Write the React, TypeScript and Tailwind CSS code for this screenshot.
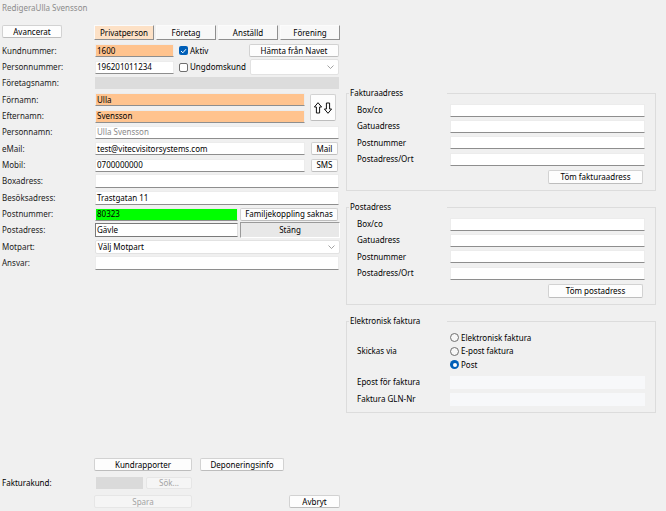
import React from 'react';

type Kids = { children?: React.ReactNode };

const Btn: React.FC<Kids & { w: string; disabled?: boolean; h?: string }> = ({ children, w, disabled, h }) => (
  <div
    className={`${w} ${h ?? 'h-[13px]'} shrink-0 flex items-center justify-center rounded-[2px] border leading-none ${
      disabled ? 'bg-[#f5f5f5] border-[#e6e6e6] text-[#a3a3a3]' : 'bg-[#fdfdfd] border-[#d2d2d2] border-b-[#bdbdbd] text-black'
    }`}
  >
    {children}
  </div>
);

const Field: React.FC<Kids & { w: string; bg?: string; h?: string; muted?: boolean }> = ({ children, w, bg, h, muted }) => (
  <div
    className={`${w} ${h ?? 'h-[13px]'} ${bg ?? 'bg-white'} shrink-0 flex items-center pl-[1px] border border-[#ececec] border-b-[#8e8e8e] leading-none ${
      muted ? 'text-[#8a8a8a]' : 'text-black'
    }`}
  >
    {children}
  </div>
);

const Chevron = () => (
  <svg width="7" height="4" viewBox="0 0 7 4" className="ml-auto mr-[4px]">
    <polyline points="0.5,0.5 3.5,3.5 6.5,0.5" fill="none" stroke="#8a8a8a" strokeWidth="0.8" />
  </svg>
);

const Combo: React.FC<Kids & { w: string; h: string }> = ({ children, w, h }) => (
  <div className={`${w} ${h} shrink-0 flex items-center bg-white border border-[#e2e2e2] rounded-[2px] pl-[2px] leading-none`}>
    {children}
    <Chevron />
  </div>
);

const Row: React.FC<Kids & { label: string }> = ({ label, children }) => (
  <div className="flex items-center h-[16.35px]">
    <div className="w-[95px] pl-[2px] shrink-0 text-[#222]">{label}</div>
    {children}
  </div>
);

const Check: React.FC<{ on?: boolean }> = ({ on }) =>
  on ? (
    <div className="w-[9px] h-[9px] rounded-[2px] bg-[#005fb8] flex items-center justify-center">
      <svg width="7" height="6" viewBox="0 0 7 6">
        <polyline points="1,3 2.8,4.8 6,1.2" fill="none" stroke="white" strokeWidth="1" />
      </svg>
    </div>
  ) : (
    <div className="w-[9px] h-[9px] rounded-[2px] border border-[#6f6f6f] bg-white" />
  );

const Radio: React.FC<{ on?: boolean; label: string }> = ({ on, label }) => (
  <div className="flex items-center h-[13.5px]">
    {on ? (
      <div className="w-[9px] h-[9px] rounded-full bg-[#005fb8] flex items-center justify-center">
        <div className="w-[4px] h-[4px] rounded-full bg-white" />
      </div>
    ) : (
      <div className="w-[9px] h-[9px] rounded-full border border-[#6f6f6f] bg-[#f7f7f7]" />
    )}
    <span className="ml-[2px]">{label}</span>
  </div>
);

const GRow: React.FC<Kids & { label: string }> = ({ label, children }) => (
  <div className="flex items-center h-[16.3px]">
    <div className="w-[103px] pl-[10px] shrink-0">{label}</div>
    {children}
  </div>
);

const Group: React.FC<Kids & { title: string; h: string }> = ({ title, h, children }) => (
  <div className={`${h} border border-[#dcdcdc] flex flex-col`}>
    <div className="-mt-[7px] ml-[2px] w-[98px] h-[12px] bg-[#f0f0f0] pl-[1px] leading-[12px]">{title}</div>
    {children}
  </div>
);

const AddressRows = () => (
  <div className="pt-[3px]">
    {['Box/co', 'Gatuadress', 'Postnummer', 'Postadress/Ort'].map(l => (
      <GRow key={l} label={l}>
        <Field w="w-[195px]" />
      </GRow>
    ))}
  </div>
);

// outlined up / down arrows of the name-swap button
const SwapArrows = () => (
  <svg width="18" height="12" viewBox="0 0 18 12">
    <polygon points="4,0.7 7.6,5 5.6,5 5.6,11 2.4,11 2.4,5 0.4,5" fill="none" stroke="#111" strokeWidth="1" />
    <polygon points="14,11.3 17.6,7 15.6,7 15.6,1 12.4,1 12.4,7 10.4,7" fill="none" stroke="#111" strokeWidth="1" />
  </svg>
);

export default function App() {
  return (
    <div className="w-[666px] h-[511px] bg-[#f0f0f0] overflow-hidden text-[8px] text-black font-['Noto_Sans',sans-serif]">
      <div className="h-[22px] pl-[2px] pt-[2px] leading-[11px] text-[#8c8c8c]">RedigeraUlla Svensson</div>

      <div className="flex h-[489px]">
        {/* left column */}
        <div className="w-[344px] shrink-0 flex flex-col">
          <div className="flex items-start mt-[3px] h-[17.5px]">
            <div className="ml-[2px]">
              <Btn w="w-[60px]">Avancerat</Btn>
            </div>
            <div className="ml-[32px] flex gap-[2px]">
              {['Privatperson', 'Företag', 'Anställd', 'Förening'].map((t, i) => (
                <div
                  key={t}
                  className={`w-[60px] h-[15px] flex items-center justify-center leading-none border border-t-[#fbfbfb] border-l-[#fbfbfb] border-r-[#8f8f8f] border-b-[#8f8f8f] ${
                    i === 0 ? 'bg-[#fde1c6]' : 'bg-[#f8f8f8]'
                  }`}
                >
                  {t}
                </div>
              ))}
            </div>
          </div>

          <Row label="Kundnummer:">
            <Field w="w-[79px]" bg="bg-[#ffc38e]">1600</Field>
            <div className="ml-[5px]"><Check on /></div>
            <span className="ml-[2px]">Aktiv</span>
            <div className="ml-auto mr-[5px]">
              <Btn w="w-[90px]">Hämta från Navet</Btn>
            </div>
          </Row>
          <Row label="Personnummer:">
            <Field w="w-[79px]">196201011234</Field>
            <div className="ml-[5px]"><Check /></div>
            <span className="ml-[2px]">Ungdomskund</span>
            <div className="ml-auto mr-[5px]">
              <Combo w="w-[89px]" h="h-[16px]" />
            </div>
          </Row>
          <Row label="Företagsnamn:">
            <div className="w-[244px] h-[12px] bg-[#dcdcdc]" />
          </Row>
          <div className="flex items-center">
            <div>
              <Row label="Förnamn:">
                <Field w="w-[210px]" bg="bg-[#ffc38e]">Ulla</Field>
              </Row>
              <Row label="Efternamn:">
                <Field w="w-[210px]" bg="bg-[#ffc38e]">Svensson</Field>
              </Row>
            </div>
            <div className="ml-[5px] w-[26px] h-[27px] bg-[#fdfdfd] border border-[#d2d2d2] border-b-[#bdbdbd] rounded-[2px] flex items-center justify-center">
              <SwapArrows />
            </div>
          </div>
          <Row label="Personnamn:">
            <Field w="w-[244px]" muted>Ulla Svensson</Field>
          </Row>
          <Row label="eMail:">
            <Field w="w-[210px]">test@vitecvisitorsystems.com</Field>
            <div className="ml-[6px]"><Btn w="w-[27px]">Mail</Btn></div>
          </Row>
          <Row label="Mobil:">
            <Field w="w-[210px]">0700000000</Field>
            <div className="ml-[6px]"><Btn w="w-[27px]">SMS</Btn></div>
          </Row>
          <Row label="Boxadress:">
            <Field w="w-[244px]" h="h-[14px]" />
          </Row>
          <Row label="Besöksadress:">
            <Field w="w-[244px]" h="h-[14px]">Trastgatan 11</Field>
          </Row>
          <Row label="Postnummer:">
            <Field w="w-[143px]" bg="bg-[#00ff00]">80323</Field>
            <div className="ml-[2px]"><Btn w="w-[98px]">Familjekoppling saknas</Btn></div>
          </Row>
          <Row label="Postadress:">
            <div className="w-[143px] h-[14px] bg-white border border-[#7a7a7a] border-r-[#e0e0e0] flex items-center pl-[1px] leading-none">Gävle</div>
            <div className="ml-[2px] w-[100px] h-[16px] bg-[#e8e8e8] border border-t-[#9a9a9a] border-l-[#9a9a9a] border-r-[#ffffff] border-b-[#ffffff] flex items-center justify-center leading-none">
              Stäng
            </div>
          </Row>
          <Row label="Motpart:">
            <Combo w="w-[245px]" h="h-[14px]">Välj Motpart</Combo>
          </Row>
          <Row label="Ansvar:">
            <Field w="w-[244px]" h="h-[14px]" />
          </Row>

          <div className="mt-auto pb-[3px] flex flex-col gap-[6px]">
            <div className="flex">
              <div className="ml-[94px]"><Btn w="w-[98px]">Kundrapporter</Btn></div>
              <div className="ml-[8px]"><Btn w="w-[84px]">Deponeringsinfo</Btn></div>
            </div>
            <div className="flex items-center h-[12px]">
              <div className="w-[96px] pl-[2px] shrink-0">Fakturakund:</div>
              <div className="w-[47px] h-[12px] bg-[#dadada]" />
              <div className="ml-[3px]"><Btn w="w-[46px]" h="h-[12px]" disabled>Sök...</Btn></div>
            </div>
            <div className="flex">
              <div className="ml-[94px]"><Btn w="w-[98px]" disabled>Spara</Btn></div>
              <div className="ml-[97px]"><Btn w="w-[51px]">Avbryt</Btn></div>
            </div>
          </div>
        </div>

        {/* right column */}
        <div className="ml-[2px] w-[310px] pt-[71px] flex flex-col gap-[16px]">
          <Group title="Fakturaadress" h="h-[98px]">
            <AddressRows />
            <div className="mt-[3px] ml-[201px]"><Btn w="w-[95px]" h="h-[14px]">Töm fakturaadress</Btn></div>
          </Group>
          <Group title="Postadress" h="h-[98px]">
            <AddressRows />
            <div className="mt-[3px] ml-[201px]"><Btn w="w-[95px]" h="h-[14px]">Töm postadress</Btn></div>
          </Group>
          <Group title="Elektronisk faktura" h="h-[92px]">
            <div className="flex items-center pt-[4px]">
              <div className="w-[103px] pl-[10px] shrink-0">Skickas via</div>
              <div className="flex flex-col">
                <Radio label="Elektronisk faktura" />
                <Radio label="E-post faktura" />
                <Radio label="Post" on />
              </div>
            </div>
            <div className="mt-[2px]">
              <div className="flex items-center h-[17px]">
                <div className="w-[103px] pl-[10px] shrink-0">Epost för faktura</div>
                <div className="w-[195px] h-[13px] bg-[#f7f8fa]" />
              </div>
              <div className="flex items-center h-[17px]">
                <div className="w-[103px] pl-[10px] shrink-0">Faktura GLN-Nr</div>
                <div className="w-[195px] h-[13px] bg-[#f7f8fa]" />
              </div>
            </div>
          </Group>
        </div>
      </div>
    </div>
  );
}
